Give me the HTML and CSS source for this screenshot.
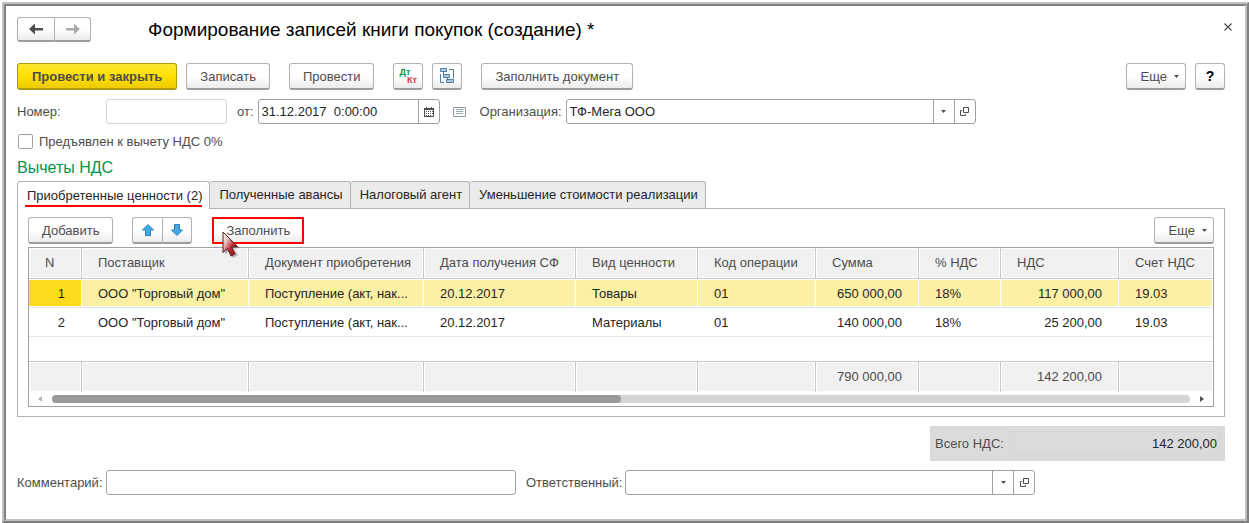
FILE: index.html
```html
<!DOCTYPE html>
<html lang="ru">
<head>
  <meta charset="utf-8">
  <title>Формирование записей книги покупок</title>
  <link rel="stylesheet" href="styles.css">
</head>
<body>
  <div class="window">
    <div class="window-inner">
      <header class="title-bar">
        <div class="btn-group nav">
          <button class="btn" type="button" aria-label="Назад">
            <svg width="14" height="12" viewBox="0 0 14 12"><path d="M0 6l6-5.500V5h8v2.500H6v4z" fill="#4d4d4d"/></svg>
          </button>
          <button class="btn" type="button" aria-label="Вперед">
            <svg width="14" height="12" viewBox="0 0 14 12"><path d="M14 6L8 .5V5H0v2.500h8v4z" fill="#ababab"/></svg>
          </button>
        </div>
        <h1>Формирование записей книги покупок (создание) *</h1>
        <button class="close" type="button" aria-label="Закрыть">
          <svg width="8" height="8" viewBox="0 0 8 8"><path d="M.5.5l7 7M7.500.5l-7 7" stroke="#4d4d4d" stroke-width="1.200"/></svg>
        </button>
      </header>

      <form class="form">
        <div class="toolbar">
          <button class="btn primary" type="button">Провести и закрыть</button>
          <button class="btn" type="button">Записать</button>
          <button class="btn spaced" type="button">Провести</button>
          <button class="btn icon spaced dtkt" type="button"><span class="dt">Дт</span><span class="kt">Кт</span></button>
          <button class="btn icon" type="button" aria-label="Структура подчиненности">
            <svg width="16" height="16" viewBox="0 0 16 16" fill="none" stroke="#4b80a8">
              <path d="M10 1.500h4.500v9M1.500 6v8.500H5M4.500 4v3M8.500 9v3"/>
              <path d="M1.500.5h6v3h-6zM4.500 6.500h6v3h-6zM7.500 11.500h7v3h-7z" fill="#a9cbe4"/>
            </svg>
          </button>
          <button class="btn spaced" type="button">Заполнить документ</button>
          <button class="btn more" type="button">Еще <svg width="5" height="3" viewBox="0 0 5 3"><path d="M0 0h5L2.500 3z" fill="#4d4d4d"/></svg></button>
          <button class="btn icon help" type="button">?</button>
        </div>

        <div class="row">
          <label class="label-first" for="number">Номер:</label>
          <div class="field field-number muted"><input id="number" type="text"></div>
          <label class="label-from" for="date">от:</label>
          <div class="field field-date">
            <input id="date" type="text" value="31.12.2017&nbsp; 0:00:00">
            <button type="button" aria-label="Календарь">
              <svg width="10" height="10" viewBox="0 0 10 10"><path d="M0 1h10v9H0z" fill="#4d4d4d"/><path d="M2 0h1v2H2zM7 0h1v2H7z" fill="#4d4d4d"/><path d="M1 3h8v6H1z" fill="#fff"/><path d="M2 4h1v1H2zM4 4h1v1H4zM6 4h1v1H6zM2 6h1v1H2zM4 6h1v1H4zM6 6h1v1H6zM8 4h1v1H8zM8 6h1v1H8zM2 8h1v1H2zM4 8h1v1H4zM6 8h1v1H6z" fill="#4d4d4d"/></svg>
            </button>
          </div>
          <svg class="list-icon" width="13" height="10" viewBox="0 0 13 10"><path d="M.5.5h12v9H.5z" fill="#fff" stroke="#8c98a5"/><path d="M3 2.500h7M3 4.500h7M3 6.500h7" stroke="#9aa5b0"/></svg>
          <label class="label-org" for="org">Организация:</label>
          <div class="field field-ref">
            <input id="org" type="text" value="ТФ-Мега ООО">
            <button type="button" aria-label="Выбрать"><svg width="5" height="3" viewBox="0 0 5 3"><path d="M0 0h5L2.500 3z" fill="#4d4d4d"/></svg></button>
            <button type="button" aria-label="Открыть"><svg width="9" height="9" viewBox="0 0 9 9" fill="none" stroke="#4d4d4d"><path d="M3.500.5h5v5h-5zM2 3.500H.5v5h5V7"/></svg></button>
          </div>
        </div>

        <label class="check"><input type="checkbox"> Предъявлен к вычету НДС 0%</label>

        <h2>Вычеты НДС</h2>
        <div class="tabs">
          <button class="tab active" type="button">Приобретенные ценности (2)</button>
          <button class="tab" type="button">Полученные авансы</button>
          <button class="tab" type="button">Налоговый агент</button>
          <button class="tab" type="button">Уменьшение стоимости реализации</button>
        </div>

        <section class="pane">
          <div class="toolbar">
            <button class="btn" type="button">Добавить</button>
            <div class="btn-group move">
              <button class="btn" type="button" aria-label="Вверх">
                <svg width="12" height="12" viewBox="0 0 12 12"><path d="M6 .5L11.500 6H8.500v5.500h-5V6H.5z" fill="#3fa9e8" stroke="#2b82b8"/></svg>
              </button>
              <button class="btn" type="button" aria-label="Вниз">
                <svg width="12" height="12" viewBox="0 0 12 12"><path d="M6 11.500L.5 6h3V.5h5V6h3z" fill="#3fa9e8" stroke="#2b82b8"/></svg>
              </button>
            </div>
            <div class="fill">
              <button class="btn" type="button">Заполнить</button>
              <svg class="cursor" width="22" height="30" viewBox="0 0 22 30">
                <defs>
                  <linearGradient id="red" x1="0" y1="0" x2="1" y2="1">
                    <stop offset="0" stop-color="#fff"/>
                    <stop offset=".3" stop-color="#e8c4c4"/>
                    <stop offset=".6" stop-color="#c0282c"/>
                    <stop offset="1" stop-color="#8c0c10"/>
                  </linearGradient>
                </defs>
                <path d="M3 4v20l4-4 4 7 5-3-4-6 6-1z" fill="#000" opacity=".25"/>
                <path d="M1 1v20.500l4.500-4 3.500 7.500 4-2-3.500-7 6-.5z" fill="url(#red)" stroke="#5c1d20"/>
              </svg>
            </div>
            <button class="btn more" type="button">Еще <svg width="5" height="3" viewBox="0 0 5 3"><path d="M0 0h5L2.500 3z" fill="#4d4d4d"/></svg></button>
          </div>

          <div class="grid">
            <table>
              <colgroup>
                <col class="c-n"><col class="c-supplier"><col class="c-doc"><col class="c-date"><col class="c-kind">
                <col class="c-code"><col class="c-sum"><col class="c-rate"><col class="c-vat"><col>
              </colgroup>
              <thead>
                <tr><th>N</th><th>Поставщик</th><th>Документ приобретения</th><th>Дата получения СФ</th><th>Вид ценности</th><th>Код операции</th><th>Сумма</th><th>% НДС</th><th>НДС</th><th>Счет НДС</th></tr>
              </thead>
              <tbody>
                <tr class="selected"><td class="num">1</td><td>ООО "Торговый дом"</td><td>Поступление (акт, нак...</td><td>20.12.2017</td><td>Товары</td><td>01</td><td class="num">650 000,00</td><td>18%</td><td class="num">117 000,00</td><td>19.03</td></tr>
                <tr><td class="num">2</td><td>ООО "Торговый дом"</td><td>Поступление (акт, нак...</td><td>20.12.2017</td><td>Материалы</td><td>01</td><td class="num">140 000,00</td><td>18%</td><td class="num">25 200,00</td><td>19.03</td></tr>
                <tr class="empty"><td colspan="10"></td></tr>
              </tbody>
              <tfoot>
                <tr><td></td><td></td><td></td><td></td><td></td><td></td><td class="num">790 000,00</td><td></td><td class="num">142 200,00</td><td></td></tr>
              </tfoot>
            </table>
            <div class="scroll">
              <svg width="4" height="6" viewBox="0 0 4 6"><path d="M4 0v6L0 3z" fill="#b5b5b5"/></svg>
              <div class="track"><div class="thumb"></div></div>
              <svg width="4" height="6" viewBox="0 0 4 6"><path d="M0 0v6l4-3z" fill="#4d4d4d"/></svg>
            </div>
          </div>
        </section>

        <div class="total">
          <label for="total">Всего НДС:</label>
          <input id="total" type="text" value="142 200,00" readonly>
        </div>

        <div class="row">
          <label class="label-first" for="comment">Комментарий:</label>
          <div class="field field-ref"><input id="comment" type="text"></div>
          <label class="label-resp" for="resp">Ответственный:</label>
          <div class="field field-ref">
            <input id="resp" type="text">
            <button type="button" aria-label="Выбрать"><svg width="5" height="3" viewBox="0 0 5 3"><path d="M0 0h5L2.500 3z" fill="#4d4d4d"/></svg></button>
            <button type="button" aria-label="Открыть"><svg width="9" height="9" viewBox="0 0 9 9" fill="none" stroke="#4d4d4d"><path d="M3.500.5h5v5h-5zM2 3.500H.5v5h5V7"/></svg></button>
          </div>
        </div>
      </form>
    </div>
  </div>
</body>
</html>
```

FILE: styles.css
```css
:root {
  --text: #4d4d4d;
  --dark: #262626;
  --border: #a0a0a0;
  --line: #c8c8c8;
  --head: #f1f1f1;
  --accent: #ff0000;
}

* {
  box-sizing: border-box;
}

body {
  margin: 0;
  padding: 2px 0 0 2px;
  min-height: 100vh;
  display: flex;
  background: #fff;
  color: var(--text);
  font: 13px/16px "Liberation Sans", Arial, sans-serif;
}

button, input {
  font: inherit;
  color: inherit;
}

button svg {
  display: block;
  flex-shrink: 0;
}

/* window frame */
.window {
  flex: 1;
  display: flex;
  min-width: 0;
  border: 2px solid;
  border-color: #c0c0c0 #808080 #808080 #c0c0c0;
}

.window-inner {
  flex: 1;
  min-width: 0;
  padding: 11px 13px 0 11px;
  border: 2px solid;
  border-color: #808080 #c0c0c0 #c0c0c0 #808080;
}

.title-bar {
  display: flex;
  align-items: center;
  height: 25px;
  margin-bottom: 21px;
}

h1 {
  flex: 1;
  margin: 0 0 0 57px;
  font-size: 19px;
  line-height: 24px;
  font-weight: normal;
  color: #000;
}

.close {
  align-self: flex-start;
  padding: 6px 0;
  border: none;
  background: none;
}

.form {
  margin-right: 7px;
}

/* buttons */
.btn {
  display: flex;
  align-items: center;
  justify-content: center;
  height: 27px;
  padding: 1px 13px 0;
  border: 1px solid #b3b3b3;
  border-bottom: 2px solid #9c9c9c;
  border-radius: 3px;
  background: linear-gradient(#fff 50%, #ececec);
  white-space: nowrap;
}

.btn.primary {
  padding: 1px 14px 0;
  border-color: #b09a10;
  background: linear-gradient(#ffe833, #ffe000 50%, #efcb00);
  font-weight: bold;
}

.btn.icon {
  width: 30px;
  padding: 0;
}

.btn.more {
  gap: 7px;
  padding: 1px 6px 0 14px;
  margin-left: auto;
}

.btn.help {
  color: #000;
  font-size: 14px;
  font-weight: bold;
}

.btn.spaced {
  margin-left: 10px;
}

.btn.dtkt {
  flex-direction: column;
  font-size: 9px;
  line-height: 8px;
  font-weight: bold;
}

.dt {
  margin-right: 7px;
  color: #009646;
}

.kt {
  margin-left: 7px;
  color: #d63a3a;
}

.btn-group {
  display: flex;
}

.btn-group .btn {
  padding: 0;
  width: 30px;
}

.btn-group .btn:first-child {
  border-right: none;
  border-radius: 3px 0 0 3px;
}

.btn-group .btn:last-child {
  border-radius: 0 3px 3px 0;
}

.nav .btn {
  width: 37px;
  height: 25px;
}

.toolbar {
  display: flex;
  gap: 9px;
}

/* fields */
.row {
  display: flex;
  align-items: center;
  margin-top: 9px;
}

.label-first {
  width: 89px;
}

.label-from {
  margin: 0 4px 0 10px;
}

.label-org {
  margin-left: 14px;
  width: 86px;
}

.label-resp {
  margin-left: 10px;
  width: 99px;
}

.field {
  display: flex;
  height: 25px;
  border: 1px solid var(--border);
  border-radius: 3px;
  background: #fff;
}

.field.muted {
  border-color: #d5d5d5;
}

.field input {
  flex: 1;
  min-width: 0;
  padding: 0 3px;
  border: none;
  background: none;
  outline: none;
  color: var(--dark);
}

.field button {
  display: flex;
  align-items: center;
  justify-content: center;
  width: 21px;
  padding: 0;
  border: none;
  border-left: 1px solid var(--border);
  background: none;
}

.field-number {
  width: 121px;
}

.field-date {
  width: 182px;
}

.field-ref {
  width: 410px;
}

.list-icon {
  margin-left: 13px;
}

.check {
  display: flex;
  align-items: center;
  gap: 6px;
  height: 15px;
  margin-top: 10px;
}

.check input {
  appearance: none;
  width: 15px;
  height: 15px;
  margin: 0 0 0 1px;
  border: 1px solid var(--border);
  border-radius: 2px;
}

h2 {
  margin: 9px 0 3px;
  font-size: 16px;
  line-height: 20px;
  font-weight: normal;
  color: #009646;
}

/* tabs */
.tabs {
  display: flex;
}

.tab {
  position: relative;
  height: 27px;
  padding: 0 7px 0 9px;
  border: 1px solid #b3b3b3;
  border-left: none;
  border-bottom: none;
  border-radius: 3px 3px 0 0;
  background: #ebebeb;
  color: var(--dark);
  white-space: nowrap;
}

.tab.active {
  height: 28px;
  margin-bottom: -1px;
  border-left: 1px solid #b3b3b3;
  background: #fff;
}

.tab.active::after {
  content: "";
  position: absolute;
  left: 7px;
  right: 7px;
  bottom: 2px;
  height: 2px;
  background: var(--accent);
}

.pane {
  padding: 8px 10px 9px;
  border: 1px solid #b3b3b3;
}

.pane .toolbar {
  margin-bottom: 3px;
}

.move {
  margin: 0 11px 0 10px;
}

.fill {
  position: relative;
}

.fill .btn {
  border: 2px solid var(--accent);
  border-radius: 0;
  padding: 0 12px;
}

.cursor {
  position: absolute;
  left: 10px;
  top: 14px;
}

/* table */
.grid {
  border: 1px solid var(--border);
}

table {
  width: 100%;
  table-layout: fixed;
  border-collapse: separate;
  border-spacing: 0;
}

.c-n { width: 53px; }
.c-supplier { width: 167px; }
.c-doc { width: 175px; }
.c-date { width: 152px; }
.c-kind { width: 122px; }
.c-code { width: 118px; }
.c-sum { width: 103px; }
.c-rate { width: 82px; }
.c-vat { width: 118px; }

th, td {
  padding: 0 16px;
  text-align: left;
  font-weight: normal;
  white-space: nowrap;
  overflow: hidden;
}

th, tfoot td {
  height: 31px;
  border-right: 1px solid var(--line);
  background: var(--head);
  box-shadow: inset 0 0 0 1px #fff;
}

th {
  border-bottom: 1px solid var(--line);
}

tfoot td {
  border-top: 1px solid var(--line);
}

th:last-child, tfoot td:last-child {
  border-right: none;
}

tbody td {
  height: 29px;
  padding-top: 2px;
  border-right: 1px solid #fff;
  border-bottom: 1px solid #e5e5e5;
  color: var(--dark);
}

.selected td {
  background: #fcf0a5;
  box-shadow: inset 0 1px #fff, inset 0 -1px #fff;
}

.selected td:first-child {
  background: #fddb1e;
}

.empty td {
  height: 24px;
  border: none;
}

td.num {
  text-align: right;
}

.scroll {
  display: flex;
  align-items: center;
  gap: 10px;
  height: 14px;
  padding: 0 9px;
}

.track {
  flex: 1;
  height: 8px;
  border-radius: 4px;
  background: #d5d5d5;
}

.thumb {
  width: 50%;
  height: 8px;
  border-radius: 4px;
  background: #999;
}

.total {
  display: flex;
  align-items: center;
  gap: 6px;
  width: 295px;
  height: 35px;
  margin: 9px 0 0 auto;
  padding: 0 5px;
  background: #dbdbdb;
}

.total input {
  flex: 1;
  min-width: 0;
  height: 25px;
  padding: 0 2px;
  border: 1px solid #d6d6d6;
  border-radius: 3px;
  background: none;
  color: var(--dark);
  text-align: right;
}
```
